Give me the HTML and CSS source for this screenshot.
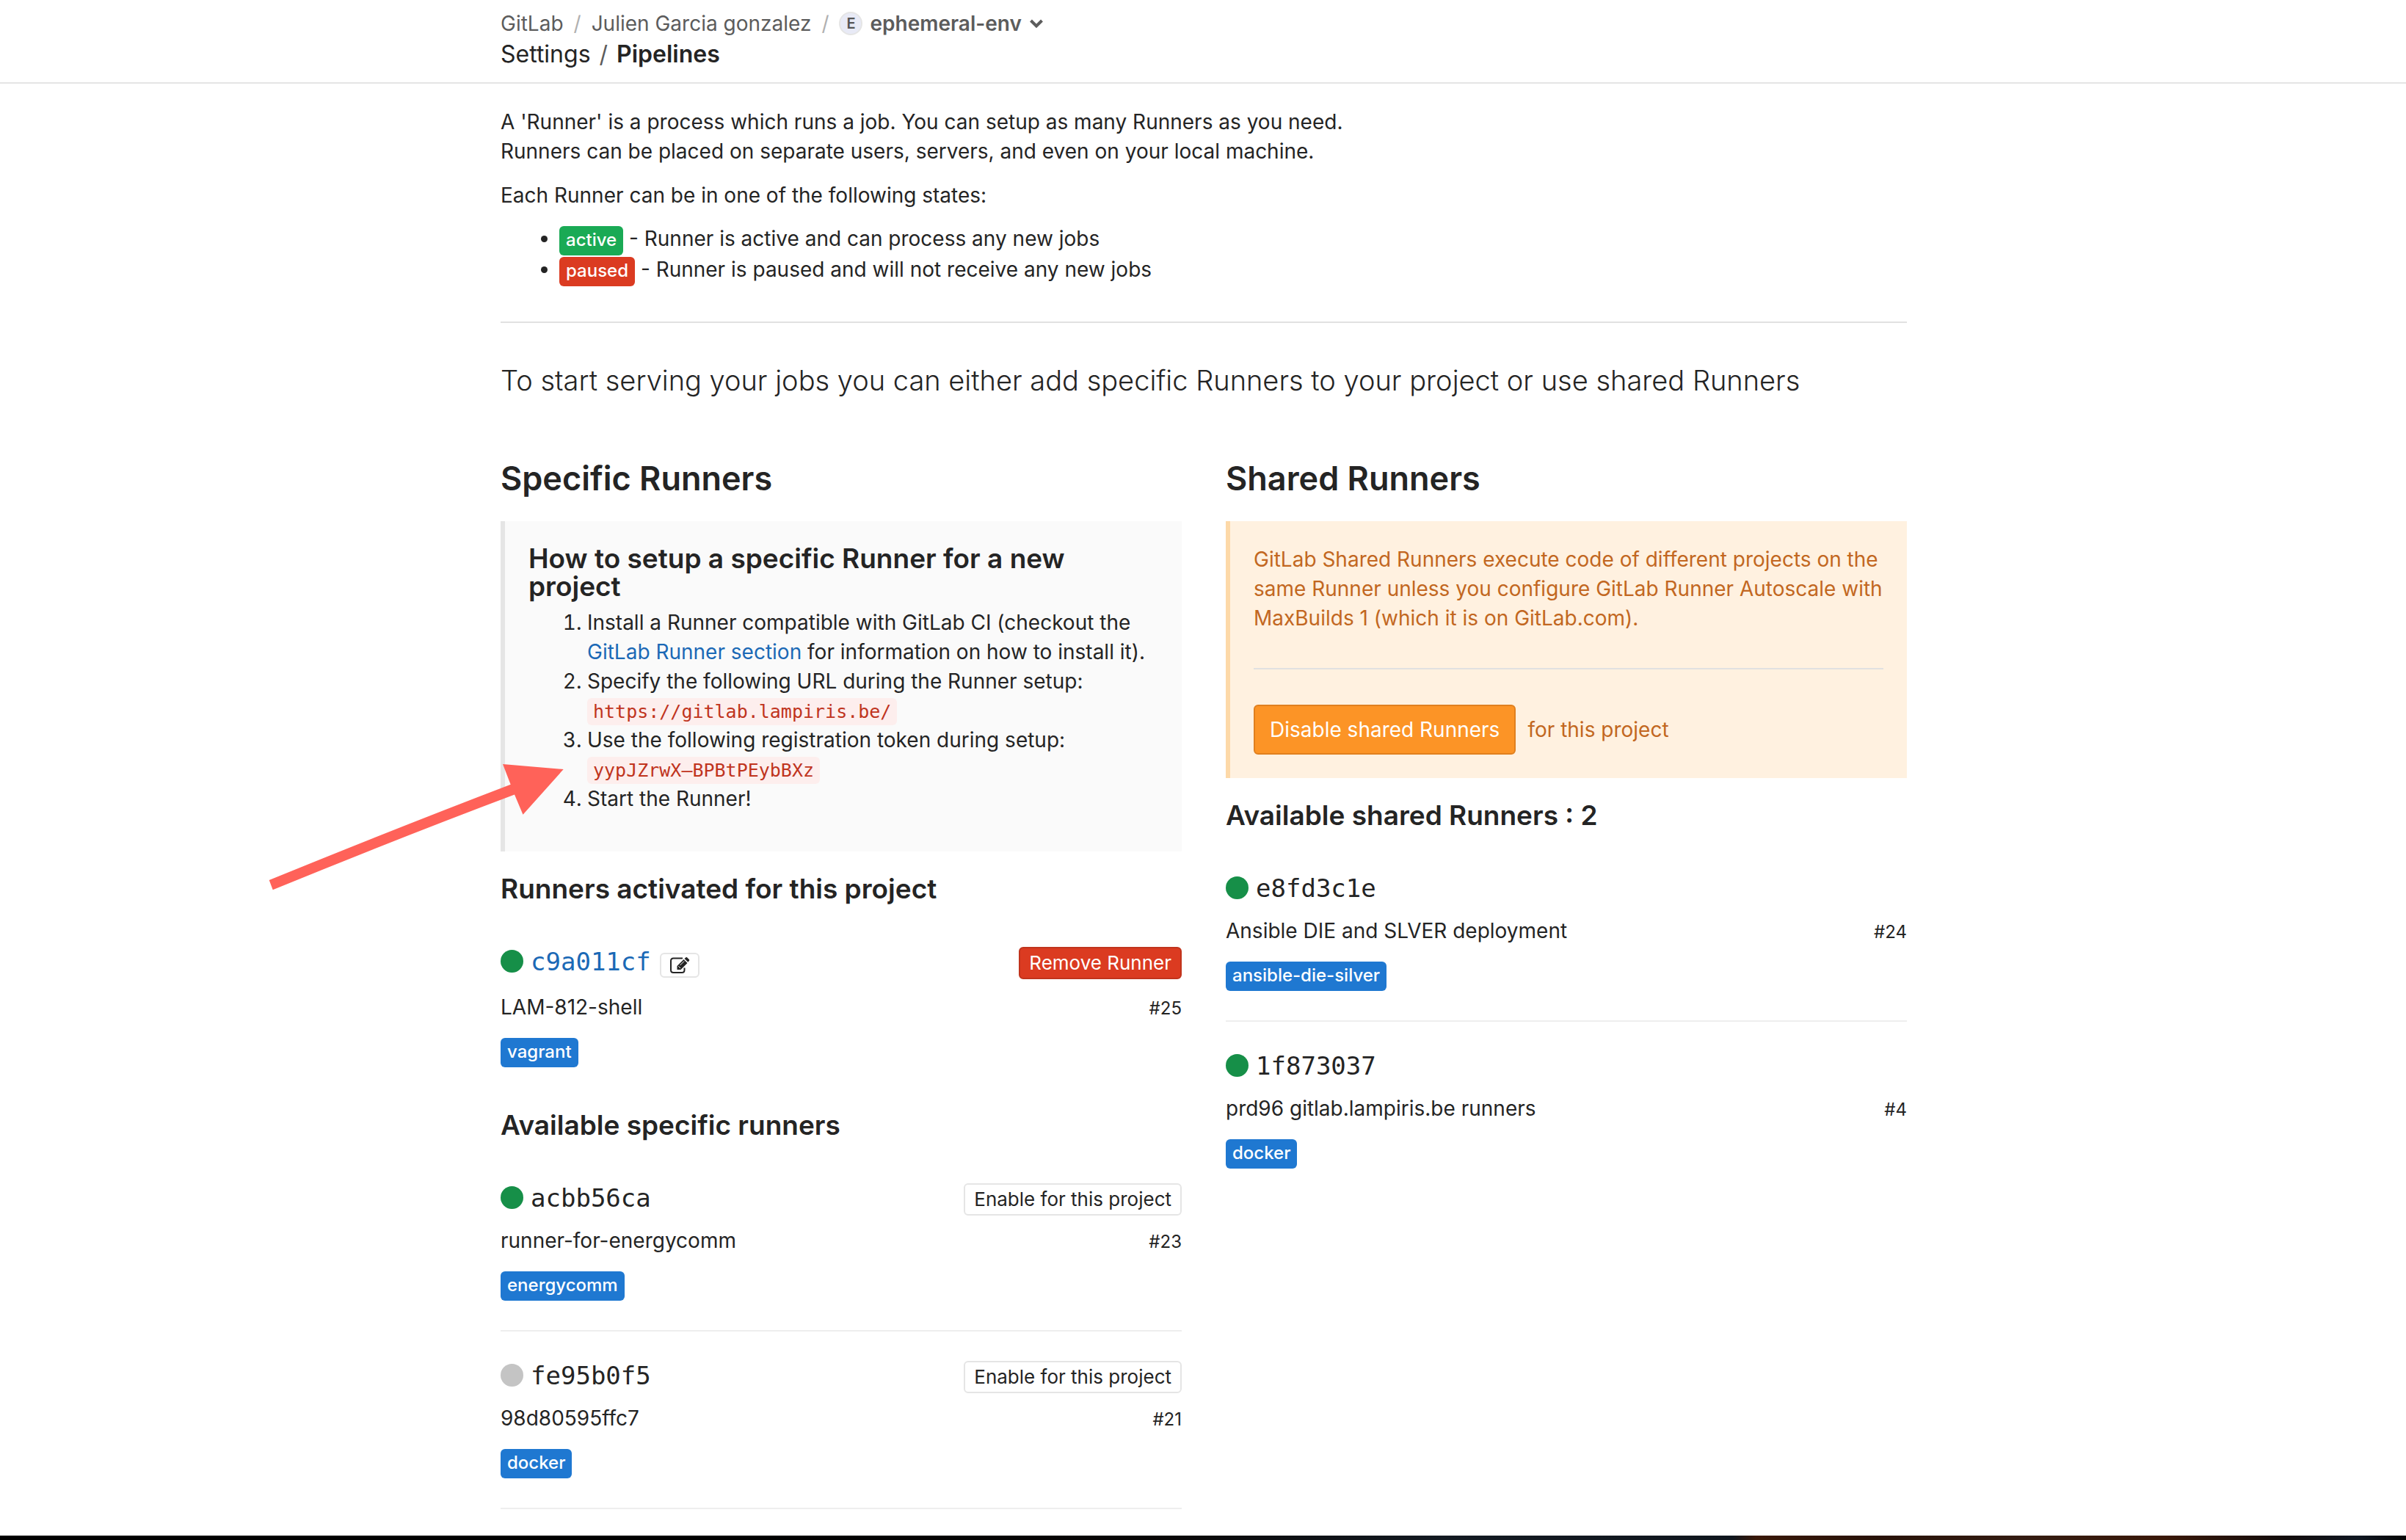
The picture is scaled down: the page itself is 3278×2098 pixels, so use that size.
FILE: index.html
```html
<!DOCTYPE html>
<html lang="en">
<head>
<meta charset="utf-8">
<title>Pipelines · Settings</title>
<link rel="stylesheet" href="styles.css">
</head>
<body>
<header class="top">
  <div class="container">
    <nav class="crumbs" aria-label="Breadcrumb">
      <a href="#">GitLab</a><span class="sep">/</span><a href="#">Julien Garcia gonzalez</a><span class="sep">/</span><span class="avatar">E</span><a href="#" class="project">ephemeral-env</a>
      <button class="chevron" type="button" aria-label="Switch project"><svg width="20" height="14" viewBox="0 0 20 14"><path d="M2.500 3L10 10.500L17.500 3" fill="none" stroke="#5c5c5c" stroke-width="4"/></svg></button>
    </nav>
    <div class="page-title"><a href="#">Settings</a><span class="slash">/</span><strong>Pipelines</strong></div>
  </div>
</header>
<main class="container content">
  <p>A 'Runner' is a process which runs a job. You can setup as many Runners as you need.<br>Runners can be placed on separate users, servers, and even on your local machine.</p>
  <p>Each Runner can be in one of the following states:</p>
  <ul class="states">
    <li><span class="label green">active</span> - Runner is active and can process any new jobs</li>
    <li><span class="label red">paused</span> - Runner is paused and will not receive any new jobs</li>
  </ul>
  <hr>
  <p class="lead">To start serving your jobs you can either add specific Runners to your project or use shared Runners</p>
  <div class="columns">
    <section>
      <h3>Specific Runners</h3>
      <div class="callout info">
        <h4>How to setup a specific Runner for a new project</h4>
        <ol>
          <li>Install a Runner compatible with GitLab CI (checkout the <a href="#">GitLab Runner section</a> for information on how to install it).</li>
          <li>Specify the following URL during the Runner setup: <br><code>https://gitlab.lampiris.be/</code></li>
          <li>Use the following registration token during setup: <br><code>yypJZrwX–BPBtPEybBXz</code></li>
          <li>Start the Runner!</li>
        </ol>
        <svg class="arrow" width="402" height="172" viewBox="0 0 402 172" aria-hidden="true"><path d="M0.700 158Q177 86 329.700 27.700L319 0L401.700 7L346.500 68.700L335 41.500Q177 101 5.700 171.300Z" fill="#ff6259"/></svg>
      </div>
      <h4>Runners activated for this project</h4>
      <ul class="runners">
        <li>
          <div class="head editable"><span class="dot"></span><a href="#" class="id">c9a011cf</a><button class="edit" type="button" aria-label="Edit"><svg width="28" height="24" viewBox="0 0 28 24"><path d="M18 2.500H5.500Q2 2.500 2 6V18.500Q2 22 5.500 22H17Q20.500 22 20.500 18.500V15.500" fill="none" stroke="#242424" stroke-width="2"/><path d="M10.500 18V13L19.500 4L24.500 9L15.500 18ZM20.500 3L22.500 1.200Q23.200 0.800 24 1.200L27 4.200Q27.500 5 27 5.700L25.400 7.800Z" fill="#242424"/><path d="M12.300 13.200L15 16M14.500 12L20 6.500" stroke="#fff" stroke-width="1"/></svg></button><button class="btn small danger" type="button">Remove Runner</button></div>
          <div class="desc"><span>LAM-812-shell</span><small>#25</small></div>
          <span class="label blue">vagrant</span>
        </li>
      </ul>
      <h4 class="next">Available specific runners</h4>
      <ul class="runners">
        <li>
          <div class="head"><span class="dot"></span><span class="id">acbb56ca</span><button class="btn small" type="button">Enable for this project</button></div>
          <div class="desc"><span>runner-for-energycomm</span><small>#23</small></div>
          <span class="label blue">energycomm</span>
        </li>
        <li class="last">
          <div class="head"><span class="dot off"></span><span class="id">fe95b0f5</span><button class="btn small" type="button">Enable for this project</button></div>
          <div class="desc"><span>98d80595ffc7</span><small>#21</small></div>
          <span class="label blue">docker</span>
        </li>
      </ul>
    </section>
    <section>
      <h3>Shared Runners</h3>
      <div class="callout warning">
        <p>GitLab Shared Runners execute code of different projects on the same Runner unless you configure GitLab Runner Autoscale with MaxBuilds 1 (which it is on GitLab.com).</p>
        <hr>
        <div class="action"><button class="btn orange" type="button">Disable shared Runners</button><span>for this project</span></div>
      </div>
      <h4>Available shared Runners : 2</h4>
      <ul class="runners">
        <li>
          <div class="head"><span class="dot"></span><span class="id">e8fd3c1e</span></div>
          <div class="desc"><span>Ansible DIE and SLVER deployment</span><small>#24</small></div>
          <span class="label blue">ansible-die-silver</span>
        </li>
        <li>
          <div class="head"><span class="dot"></span><span class="id">1f873037</span></div>
          <div class="desc"><span>prd96 gitlab.lampiris.be runners</span><small>#4</small></div>
          <span class="label blue">docker</span>
        </li>
      </ul>
    </section>
  </div>
</main>
<div class="strip"></div>
</body>
</html>
```
FILE: styles.css
```css
* { box-sizing: border-box; }
body {
  margin: 0;
  min-height: 100vh;
  display: flex;
  flex-direction: column;
  background: #fff;
  color: #242424;
  font: 28px/40px Inter, "Liberation Sans", sans-serif;
}
a { color: #1b69b6; text-decoration: none; }
p { margin: 0 0 20px; }
ul, ol { margin: 0; }
button { font-family: inherit; cursor: pointer; }
.container { width: 100%; max-width: 1980px; margin: 0 auto; padding: 0 31px 0 33px; }

.top { border-bottom: 2px solid #e5e5e5; padding: 12px 0 18px; }
.crumbs { display: flex; align-items: center; margin-bottom: 2px; color: #5c5c5c; }
.crumbs a { color: inherit; }
.sep { color: #b0b0b0; margin: 0 14px; }
.avatar {
  width: 32px; height: 32px; margin-right: 10px;
  border: 2px solid #e5e5e5; border-radius: 50%;
  background: #e8eaf6; color: #555;
  font-size: 20px; line-height: 28px; font-weight: 600; text-align: center;
}
.project { font-weight: 600; }
.chevron { border: 0; padding: 0; margin-left: 10px; background: none; display: flex; }
.page-title { font-size: 32px; }
.page-title a { color: inherit; }
.page-title strong { font-weight: 600; }
.slash { margin: 0 12px; color: #5c5c5c; }

.content { flex: 1; padding-top: 32px; }
.states { padding-left: 80px; line-height: 38px; }
hr { border: 0; border-top: 2px solid #e1e1e1; margin: 48px 0; }
.label {
  display: inline-block;
  padding: 5px 9px 7px;
  border-radius: 6px;
  color: #fff;
  font-size: 24px; line-height: 28px; font-weight: 500;
}
.green { background: #1aaa55; }
.red { background: #db3b21; }
.blue { background: #1f78d1; }
.lead { margin: 54px 0 85px; font-size: 38px; line-height: 48px; font-weight: 300; }

.columns { display: grid; grid-template-columns: 1fr 1fr; gap: 60px; }
h3 { margin: 0 0 33px; font-size: 45px; line-height: 50px; font-weight: 600; }
h4 { margin: 32px 0 60px; font-size: 37px; line-height: 38px; font-weight: 600; }
h4.next { margin-top: 60px; }

.callout { position: relative; padding: 32px; border-left: 6px solid; }
.info { padding-bottom: 52px; border-color: #e5e5e5; background: #fafafa; }
.info h4 { margin: 0 0 10px; }
.info ol { padding-left: 80px; }
code {
  padding: 4px 8px;
  border-radius: 6px;
  background: #fdeeed; color: #c0341d;
  font: 25px/30px "DejaVu Sans Mono", monospace;
}
.arrow { position: absolute; left: -322px; top: 331px; }
.warning { border-color: #fdd9a8; background: #fff1e0; color: #c26721; }
.warning p { margin: 0; }
.action { display: flex; align-items: center; gap: 16px; }

.btn {
  border: 2px solid #e5e5e5; border-radius: 6px;
  background: #fff; color: #242424;
  padding: 0 20px;
  font-size: 28px; line-height: 64px;
}
.small { margin-left: auto; padding: 0 12px; font-size: 26px; line-height: 40px; }
.danger { background: #db3b21; border-color: #c0341d; color: #fff; }
.orange { background: #fc9426; border-color: #e0801f; color: #fff; }

.runners { list-style: none; padding: 0; }
.runners li + li { margin-top: 40px; padding-top: 40px; border-top: 2px solid #eee; }
.runners .last { padding-bottom: 40px; border-bottom: 2px solid #eee; }
.runners .label { display: table; }
.head { display: flex; align-items: flex-start; height: 44px; margin-bottom: 14px; }
.editable { height: 48px; }
.dot { width: 31px; height: 31px; margin: 4px 10px 0 0; border-radius: 50%; background: #168f48; }
.off { background: #c4c4c4; }
.id { font: 34px/40px "DejaVu Sans Mono", monospace; }
.edit { margin: 8px 0 0 12px; width: 54px; height: 34px; padding: 0; border: 2px solid #e5e5e5; border-radius: 6px; background: #fff; display: flex; justify-content: center; align-items: center; }
.desc { display: flex; justify-content: space-between; align-items: baseline; height: 40px; margin-bottom: 22px; }
.desc small { font-size: 24px; }
.strip {
  height: 6px;
  background: linear-gradient(90deg, #000 0 30%, #080606 48%, #131a22 60%, #10161e 72%, #3a1808 73%, #281208 78%, #341c12 84%, #3a1808 90%, #120c0c 95%, #101722 98%, #050505);
}
```
